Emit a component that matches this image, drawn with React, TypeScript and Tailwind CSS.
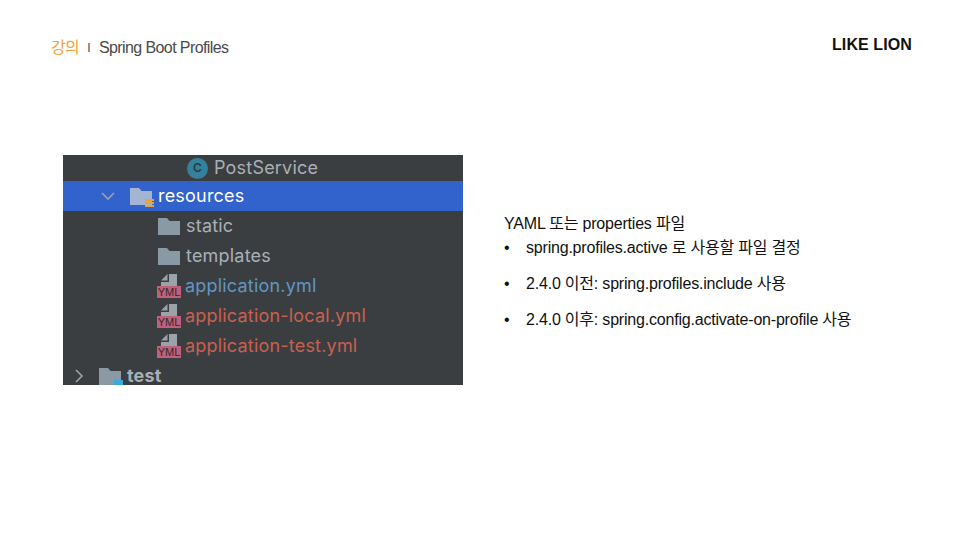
const sans = "font-['Liberation_Sans','Noto_Sans_CJK_KR',sans-serif]";

function Chevron({ open }: { open: boolean }) {
  return (
    <svg width="16" height="16" viewBox="0 0 16 16" fill="none" stroke="#9da2a6" strokeWidth="1.6">
      <path d={open ? "M2 5l6 6 6-6" : "M5 2l6 6-6 6"} />
    </svg>
  );
}

function Folder({ color = "#8a9aa5" }: { color?: string }) {
  return (
    <svg width="22" height="18" viewBox="0 0 22 18">
      <path d="M0 1h9l2.500 3H22v14H0z" fill={color} />
    </svg>
  );
}

function YmlIcon() {
  return (
    <div className="relative h-[24px] w-[24px] shrink-0">
      <svg className="absolute left-[4px] top-0" width="16" height="14" viewBox="0 0 16 14">
        <path d="M8 0h8v14H0V8h8z" fill="#9aa3a9" />
        <path d="M0 6.500L6.500 0v6.500z" fill="#9aa3a9" />
      </svg>
      <span className="absolute bottom-0 left-0 flex h-[12px] w-[24px] items-center justify-center bg-[#c1607a] font-['Liberation_Sans',sans-serif] text-[11px] leading-none text-[#2b2d30]">
        YML
      </span>
    </div>
  );
}

const rowText = "text-[18px] leading-none tracking-[0.2px]";

function FileRow({ name, color }: { name: string; color: string }) {
  return (
    <div className="flex h-[30px] items-center gap-[4px] pl-[94px]">
      <YmlIcon />
      <span className={`${rowText} ${color}`}>{name}</span>
    </div>
  );
}

export default function App() {
  return (
    <div className="h-[540px] w-[960px] overflow-hidden bg-white">
      <header className={`flex h-[155px] items-start justify-between pl-[51px] pr-[48px] pt-[36px] ${sans}`}>
        <div className="flex items-center text-[16px] leading-[24px] tracking-[-0.6px] text-[#4a4a4a]">
          <span className="text-[#f5a33c]">강의</span>
          <span className="ml-[8px] mr-[9px] text-[12px]">I</span>
          <span>Spring Boot Profiles</span>
        </div>
        <div className="text-[16px] font-bold leading-[18px] tracking-[0.1px] text-[#111]">LIKE LION</div>
      </header>

      <main className="flex pl-[63px]">
        <div className="h-[230px] w-[400px] overflow-hidden bg-[#3b3e41] font-['Inter',sans-serif]">
          <div className="flex h-[26px] items-center gap-[6px] pl-[124px]">
            <span className="flex h-[21px] w-[21px] items-center justify-center rounded-full bg-[#34819d] text-[12px] font-semibold text-[#2b3a40]">
              C
            </span>
            <span className={`${rowText} text-[#a9b0b5]`}>PostService</span>
          </div>

          <div className="flex h-[30px] items-center bg-[#3262cb] pl-[37px]">
            <Chevron open />
            <div className="relative ml-[14px] h-[18px] w-[22px]">
              <Folder color="#a3b5d2" />
              <div className="absolute bottom-[-2px] right-[-2px] flex w-[9px] flex-col gap-[1px]">
                <div className="h-[2px] bg-[#e8a33a]" />
                <div className="h-[2px] bg-[#e8a33a]" />
                <div className="h-[2px] bg-[#e8a33a]" />
              </div>
            </div>
            <span className={`${rowText} ml-[6px] text-white`}>resources</span>
          </div>

          <div className="flex h-[30px] items-center gap-[6px] pl-[95px]">
            <Folder />
            <span className={`${rowText} text-[#a9b0b5]`}>static</span>
          </div>
          <div className="flex h-[30px] items-center gap-[6px] pl-[95px]">
            <Folder />
            <span className={`${rowText} text-[#a9b0b5]`}>templates</span>
          </div>

          <FileRow name="application.yml" color="text-[#5f96c4]" />
          <FileRow name="application-local.yml" color="text-[#c9604f]" />
          <FileRow name="application-test.yml" color="text-[#c9604f]" />

          <div className="flex h-[30px] items-center pl-[8px]">
            <Chevron open={false} />
            <div className="relative ml-[12px] h-[18px] w-[22px]">
              <Folder />
              <div className="absolute bottom-[-3px] right-[-2px] h-[8px] w-[9px] bg-[#3ba8e0]" />
            </div>
            <span className={`${rowText} ml-[6px] font-bold text-[#a9b0b5]`}>test</span>
          </div>
        </div>

        <div className={`ml-[41px] pt-[57px] text-[16px] tracking-[-0.2px] text-[#111] ${sans}`}>
          <p className="leading-[24px]">YAML 또는 properties 파일</p>
          <ul className="flex flex-col gap-[12px]">
            <li className="flex leading-[24px]">
              <span className="w-[22px]">•</span>
              <span>spring.profiles.active 로 사용할 파일 결정</span>
            </li>
            <li className="flex leading-[24px]">
              <span className="w-[22px]">•</span>
              <span>2.4.0 이전: spring.profiles.include 사용</span>
            </li>
            <li className="flex leading-[24px]">
              <span className="w-[22px]">•</span>
              <span>2.4.0 이후: spring.config.activate-on-profile 사용</span>
            </li>
          </ul>
        </div>
      </main>
    </div>
  );
}
